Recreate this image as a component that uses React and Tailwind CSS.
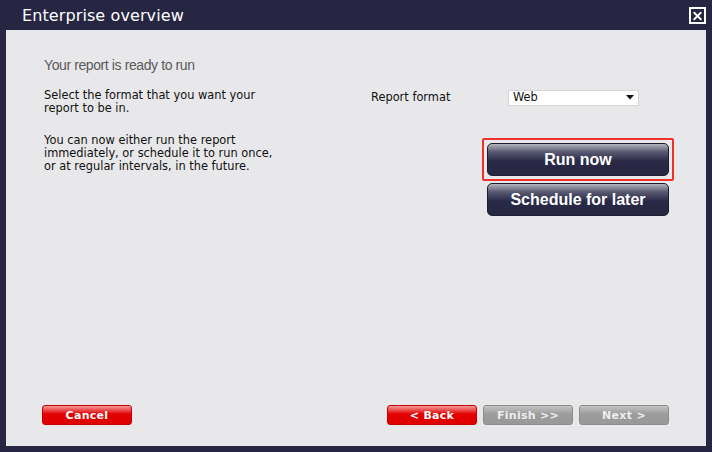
import { X } from "lucide-react";

function WizardButton({ label, variant }) {
  const styles = {
    red: "bg-[linear-gradient(#f59a9a_0%,#e20000_45%,#e00000_100%)] border-[#c40000] text-white",
    gray: "bg-[linear-gradient(#c4c4c4_0%,#9c9c9c_45%,#999_100%)] border-[#8c8c8c] text-[#eeeeee]",
  };
  return (
    <button
      className={`w-[90px] h-[20px] rounded-[3px] border text-[11px] font-bold tracking-[0.3px] leading-none flex items-center justify-center ${styles[variant]}`}
      style={{ fontFamily: "'DejaVu Sans', Verdana, sans-serif" }}
    >
      {label}
    </button>
  );
}

function BigButton({ label }) {
  return (
    <button className="w-[182px] h-[33px] rounded-[5px] border border-[#1c1c30] bg-[linear-gradient(#b4b4bc_0%,#5a5a72_25%,#2a2a48_55%,#262642_100%)] text-white text-[16px] font-bold font-['Liberation_Sans',Arial,sans-serif] flex items-center justify-center">
      {label}
    </button>
  );
}

export default function App() {
  return (
    <div className="w-[712px] h-[452px] bg-[#262642] flex flex-col font-['DejaVu_Sans',Verdana,sans-serif]">
      <header className="h-[30px] flex items-center justify-between pl-[22px] pr-[6px]">
        <h1 className="text-white text-[16px] leading-none tracking-[0.1px] pt-[1px]">Enterprise overview</h1>
        <div className="w-[17px] h-[17px] border-2 border-white flex items-center justify-center mt-[1px]">
          <X size={14} strokeWidth={3.5} className="text-white" />
        </div>
      </header>
      <main className="mx-[6px] mb-[6px] flex-1 bg-[#e8e8ea] flex flex-col">
        <div className="flex flex-1 pt-[26px]">
          <section className="w-[365px] pl-[38px]">
            <h2 className="text-[#5a5a5a] text-[14px] leading-[18px] tracking-[-0.4px] font-['Liberation_Sans',Arial,sans-serif]">
              Your report is ready to run
            </h2>
            <p className="mt-[15px] text-[11.4px] leading-[13px] text-[#111]">
              Select the format that you want your<br />report to be in.
            </p>
            <p className="mt-[19px] text-[11.4px] leading-[13px] text-[#111]">
              You can now either run the report<br />immediately, or schedule it to run once,<br />or at regular intervals, in the future.
            </p>
          </section>
          <section className="flex-1 pt-[33px]">
            <div className="flex items-center">
              <span className="text-[11.4px] text-[#111] w-[137px]">Report format</span>
              <div className="w-[131px] h-[16px] bg-white border border-[#d6d6d6] flex items-center justify-between pl-[4px] pr-[4px]">
                <span className="text-[11.4px] leading-none text-[#111]">Web</span>
                <svg width="8" height="5" viewBox="0 0 8 5"><path d="M0 0h8L4 4.5z" fill="#111" /></svg>
              </div>
            </div>
            <div className="ml-[111px] mt-[32px] flex flex-col gap-[2px] w-[192px]">
              <div className="border-[2px] border-[#f0302a] rounded-[2px] p-[3px]">
                <BigButton label="Run now" />
              </div>
              <div className="pl-[5px]">
                <BigButton label="Schedule for later" />
              </div>
            </div>
          </section>
        </div>
        <footer className="h-[46px] flex items-start justify-between pl-[36px] pr-[37px] pt-[5px]">
          <WizardButton label="Cancel" variant="red" />
          <div className="flex gap-[6px]">
            <WizardButton label="< Back" variant="red" />
            <WizardButton label="Finish >>" variant="gray" />
            <WizardButton label="Next >" variant="gray" />
          </div>
        </footer>
      </main>
    </div>
  );
}
